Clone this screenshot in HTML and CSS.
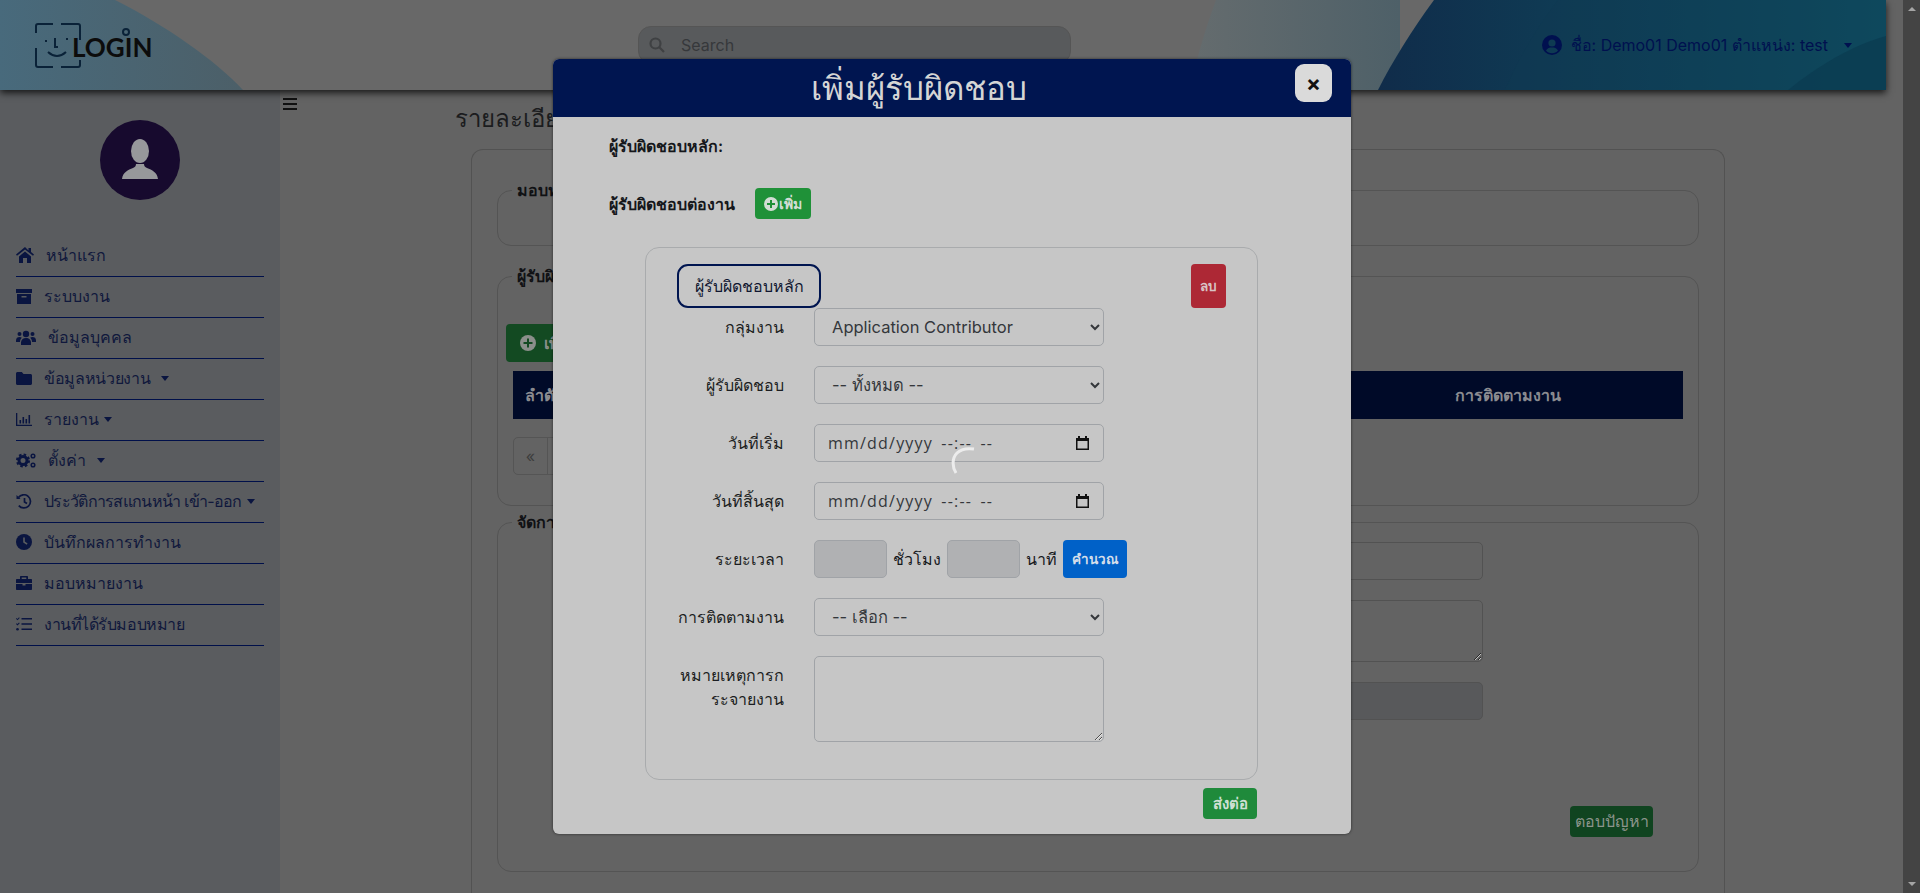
FILE: index.html
```html
<!DOCTYPE html>
<html lang="th">

<head>
    <meta charset="UTF-8">
    <meta name="viewport" content="width=device-width, initial-scale=1.0">
    <title>เพิ่มผู้รับผิดชอบ</title>
    <link rel="stylesheet" href="styles.css">
</head>

<body>
    <div class="page">
        <div class="viewport">
            <header class="topbar">
                <svg class="topbar-bg" viewBox="0 0 1886 90" preserveAspectRatio="none">
                    <defs>
                        <linearGradient id="blobLeft" x1="0" x2="1">
                            <stop offset="0" stop-color="#486a7c" />
                            <stop offset="1" stop-color="#4c5f68" />
                        </linearGradient>
                        <linearGradient id="blobGrey" x1="0" x2="1">
                            <stop offset="0" stop-color="#656c6e" />
                            <stop offset="1" stop-color="#4e6068" />
                        </linearGradient>
                        <linearGradient id="blobDark" x1="0" x2="1">
                            <stop offset="0" stop-color="#102c4a" />
                            <stop offset="1" stop-color="#0d5566" />
                        </linearGradient>
                    </defs>
                    <path d="M0 0H115C165 25 215 60 243 90H0Z" fill="url(#blobLeft)" />
                    <path d="M1216 0C1205 30 1196 60 1190 90H1400V0Z" fill="url(#blobGrey)" />
                    <path d="M1434 0C1412 30 1392 62 1378 90H1886V0Z" fill="url(#blobDark)" />
                    <path d="M1558 0C1535 30 1518 60 1505 90H1886V0Z" fill="#0f3a52" opacity=".45" />
                    <path d="M1788 90C1815 68 1850 46 1886 36V90Z" fill="#0a3a50" opacity=".7" />
                </svg>
                <a class="logo">
                    <svg class="logo-mark" width="96" height="46" viewBox="35 22 96 46" fill="none" stroke="#0a2238" stroke-width="2">
                        <path d="M53 24H38q-2 0-2 2v7M36 48v17q0 2 2 2h15M61 24h17q2 0 2 2v14M80 60v5q0 2-2 2H61" />
                        <path d="M46 40v2M67 38v2M55 38v9h3M48 52q9 8 18 0" />
                        <circle cx="126" cy="32" r="3" />
                    </svg>
                    <span class="logo-text">LOGIN</span>
                </a>
                <div class="search">
                    <svg width="16" height="16" viewBox="0 0 16 16" fill="none" stroke="#3f4143" stroke-width="2.2">
                        <circle cx="6.5" cy="6.5" r="5" />
                        <path d="M10.3 10.3L15 15" />
                    </svg>
                    <span>Search</span>
                </div>
                <div class="user">
                    <svg width="20" height="20" viewBox="0 0 20 20">
                        <circle cx="10" cy="10" r="10" fill="#00104f" />
                        <circle cx="10" cy="8" r="3.6" fill="#0e3a52" />
                        <path d="M4 15.5c1.5-2.5 3.5-3 6-3s4.5.5 6 3c-1.5 1.8-3.5 2.8-6 2.8s-4.5-1-6-2.8z" fill="#0e3a52" />
                    </svg>
                    <span>ชื่อ: Demo01 Demo01 ตำแหน่ง: test</span>
                    <i class="caret user-caret"></i>
                </div>
            </header>

            <div class="layout">
                <aside class="sidebar">
                    <div class="avatar">
                        <svg width="36" height="42" viewBox="0 0 36 42" fill="#97989b">
                            <ellipse cx="18" cy="12" rx="9" ry="12" />
                            <path d="M0 40c1-7 6-9 11-11 2-1 3-2 3-4h8c0 2 1 3 3 4 5 2 10 4 11 11z" />
                        </svg>
                    </div>
                    <nav class="menu">
                        <a class="menu-item">
                            <svg width="18" height="16" viewBox="0 0 18 16">
                                <path d="M9 0 0 7.5l1 1.3L9 2.5l8 6.3 1-1.3-3-2.4V1h-2.5v2.4z" />
                                <path d="M3 9.5V16h4v-5h4v5h4V9.5L9 4.5z" />
                            </svg>
                            <span>หน้าแรก</span>
                        </a>
                        <a class="menu-item">
                            <svg width="16" height="15" viewBox="0 0 16 15">
                                <path d="M0 0h16v4H0zM1 5h14v10H1zM5.5 7v1.5h5V7z" fill-rule="evenodd" />
                            </svg>
                            <span>ระบบงาน</span>
                        </a>
                        <a class="menu-item">
                            <svg width="20" height="15" viewBox="0 0 20 15">
                                <circle cx="10" cy="4" r="3.2" />
                                <circle cx="3.5" cy="4" r="2" />
                                <circle cx="16.5" cy="4" r="2" />
                                <path d="M5 15v-2.5C5 10 7 8 10 8s5 2 5 4.5V15zM0 10.5C0 8 1.5 7 3.5 7c1 0 1.8.3 2.3.8C4.500 9 4 10.5 4 12H0zM20 10.5C20 8 18.5 7 16.5 7c-1 0-1.8.3-2.3.8 1.3 1.2 1.8 2.7 1.8 4.200h4z" />
                            </svg>
                            <span>ข้อมูลบุคคล</span>
                        </a>
                        <a class="menu-item">
                            <svg width="16" height="13" viewBox="0 0 16 13">
                                <path d="M0 1.5C0 .7.7 0 1.5 0h4.3L7.5 2h7c.8 0 1.5.7 1.5 1.5v8c0 .8-.7 1.5-1.5 1.5h-13C.7 13 0 12.3 0 11.5z" />
                            </svg>
                            <span class="tight-s">ข้อมูลหน่วยงาน</span>
                            <i class="caret caret-wide"></i>
                        </a>
                        <a class="menu-item">
                            <svg width="16" height="13" viewBox="0 0 16 13">
                                <path d="M0 0h1.3v11.7H16V13H0zM3.5 7h1.6v3.5H3.5zM6.5 4h1.6v6.5H6.5zM9.5 6h1.6v4.5H9.500zM12.500 2h1.600v8.500h-1.600z" />
                            </svg>
                            <span>รายงาน</span>
                            <i class="caret"></i>
                        </a>
                        <a class="menu-item">
                            <svg width="20" height="15" viewBox="0 0 20 15">
                                <circle cx="7" cy="7.5" r="4" fill="none" stroke="#0a1540" stroke-width="3" />
                                <circle cx="7" cy="7.5" r="6" fill="none" stroke="#0a1540" stroke-width="2" stroke-dasharray="2.5 2.2" />
                                <circle cx="17" cy="3" r="1.8" fill="none" stroke="#0a1540" stroke-width="1.5" />
                                <circle cx="17" cy="12" r="1.8" fill="none" stroke="#0a1540" stroke-width="1.5" />
                            </svg>
                            <span>ตั้งค่า</span>
                            <i class="caret caret-wide"></i>
                        </a>
                        <a class="menu-item">
                            <svg width="16" height="15" viewBox="0 0 16 15" fill="none" stroke="#0a1540" stroke-width="1.7">
                                <path d="M2.5 3.5A6.6 6.6 0 1 1 2.8 11.6M8.5 4v4l2.5 1.5" />
                                <path d="M.5 1v4h4z" fill="#0a1540" stroke="none" />
                            </svg>
                            <span class="tight-l">ประวัติการสแกนหน้า เข้า-ออก</span>
                            <i class="caret"></i>
                        </a>
                        <a class="menu-item">
                            <svg width="16" height="16" viewBox="0 0 16 16">
                                <circle cx="8" cy="8" r="8" />
                                <path d="M7.2 3.5h1.6v4.1l2.8 1.8-.9 1.3-3.5-2.3z" fill="#5a5c5f" />
                            </svg>
                            <span>บันทึกผลการทำงาน</span>
                        </a>
                        <a class="menu-item">
                            <svg width="16" height="14" viewBox="0 0 16 14">
                                <path d="M5 0h6c.6 0 1 .4 1 1v2h3c.6 0 1 .4 1 1v3H0V4c0-.6.4-1 1-1h3V1c0-.6.4-1 1-1zm.7 1.5V3h4.6V1.5zM0 8h6.5v1.5h3V8H16v5c0 .6-.4 1-1 1H1c-.6 0-1-.4-1-1z" />
                            </svg>
                            <span>มอบหมายงาน</span>
                        </a>
                        <a class="menu-item">
                            <svg width="16" height="14" viewBox="0 0 16 14">
                                <path d="M5.5 1H16v1.600H5.500zM5.500 6.200H16v1.600H5.500zM5.500 11.400H16V13H5.500zM0 1.800l.7-.7.8.8L3 .3l.7.7L1.500 3.300zM0 7l.7-.7.8.8L3 5.500l.7.7L1.500 8.500z" />
                                <circle cx="1.5" cy="12.2" r="1.3" />
                            </svg>
                            <span class="tight-m">งานที่ได้รับมอบหมาย</span>
                        </a>
                    </nav>
                </aside>

                <main class="content">
                    <div class="toggle"><span></span><span></span><span></span></div>
                    <h1 class="page-title">รายละเอียดงาน</h1>
                    <section class="card">
                        <fieldset class="group group-assign">
                            <legend>มอบหมายงาน</legend>
                        </fieldset>
                        <fieldset class="group group-owner">
                            <legend>ผู้รับผิดชอบ</legend>
                            <button class="btn btn-add-dark">
                                <svg width="16" height="16" viewBox="0 0 16 16">
                                    <circle cx="8" cy="8" r="8" fill="#8b8f8b" />
                                    <path d="M7 3.5h2V7h3.5v2H9v3.5H7V9H3.5V7H7z" fill="#134a22" />
                                </svg>
                                เพิ่ม
                            </button>
                            <table class="owner-table">
                                <thead>
                                    <tr>
                                        <th class="col-no">ลำดับ</th>
                                        <th class="col-mid">ผู้รับผิดชอบ</th>
                                        <th class="col-track">การติดตามงาน</th>
                                    </tr>
                                </thead>
                            </table>
                            <ul class="pager">
                                <li>«</li>
                                <li>1</li>
                            </ul>
                        </fieldset>
                        <fieldset class="group group-manage">
                            <legend>จัดการ</legend>
                            <div class="dim-input"></div>
                            <div class="dim-input dim-area"><textarea></textarea></div>
                            <div class="dim-input dim-off"></div>
                            <button class="btn btn-answer">ตอบปัญหา</button>
                        </fieldset>
                    </section>
                </main>
            </div>
        </div>
        <div class="scrollbar"><i class="arrow-up"></i><i class="arrow-down"></i></div>
    </div>

    <div class="modal">
        <div class="modal-head">
            <h2>เพิ่มผู้รับผิดชอบ</h2>
            <button class="modal-close">×</button>
        </div>
        <div class="modal-body">
            <div class="owner-line">ผู้รับผิดชอบหลัก:</div>
            <div class="owner-line owner-add">
                <span>ผู้รับผิดชอบต่องาน</span>
                <button class="btn btn-add">
                    <svg width="14" height="14" viewBox="0 0 14 14">
                        <circle cx="7" cy="7" r="7" fill="#d3ddd5" />
                        <path d="M6 3h2v3h3v2H8v3H6V8H3V6h3z" fill="#1f9138" />
                    </svg>
                    เพิ่ม
                </button>
            </div>
            <div class="panel">
                <div class="panel-top">
                    <div class="badge">ผู้รับผิดชอบหลัก</div>
                    <button class="btn btn-del">ลบ</button>
                </div>
                <div class="field">
                    <label>กลุ่มงาน</label>
                    <select class="control">
                        <option>Application Contributor</option>
                    </select>
                </div>
                <div class="field">
                    <label>ผู้รับผิดชอบ</label>
                    <select class="control">
                        <option>-- ทั้งหมด --</option>
                    </select>
                </div>
                <div class="field">
                    <label>วันที่เริ่ม</label>
                    <div class="control control-date">
                        <span>mm/dd/yyyy --:-- --</span>
                        <svg width="13" height="14" viewBox="0 0 13 14">
                            <path d="M2 0h2v2h5V0h2v2h2v12H0V2h2zM1.5 5v7.500h10V5z" fill="#111" fill-rule="evenodd" />
                        </svg>
                    </div>
                </div>
                <div class="field">
                    <label>วันที่สิ้นสุด</label>
                    <div class="control control-date">
                        <span>mm/dd/yyyy --:-- --</span>
                        <svg width="13" height="14" viewBox="0 0 13 14">
                            <path d="M2 0h2v2h5V0h2v2h2v12H0V2h2zM1.5 5v7.500h10V5z" fill="#111" fill-rule="evenodd" />
                        </svg>
                    </div>
                </div>
                <div class="field">
                    <label>ระยะเวลา</label>
                    <div class="duration">
                        <input class="control control-off" disabled>
                        <span>ชั่วโมง</span>
                        <input class="control control-off" disabled>
                        <span>นาที</span>
                        <button class="btn btn-calc">คำนวณ</button>
                    </div>
                </div>
                <div class="field">
                    <label>การติดตามงาน</label>
                    <select class="control">
                        <option>-- เลือก --</option>
                    </select>
                </div>
                <div class="field">
                    <label>หมายเหตุการก<br>ระจายงาน</label>
                    <textarea class="control control-area"></textarea>
                </div>
            </div>
            <div class="modal-foot">
                <button class="btn btn-send">ส่งต่อ</button>
            </div>
        </div>
    </div>

    <svg class="spinner" width="30" height="30" viewBox="0 0 30 30" fill="none">
        <path d="M5 27C1 21 1 12 6 7C10 3 16 2 23 3" stroke="#ececec" stroke-width="3" />
    </svg>
</body>

</html>
```
FILE: styles.css
```css
* {
    box-sizing: border-box;
}

html {
    overflow: hidden;
}

body {
    margin: 0;
    height: 893px;
    overflow: hidden;
    background-color: #636363;
    font-family: Inter, "Noto Sans", sans-serif;
    font-size: 16px;
    color: #16181c;
}

button {
    font-family: inherit;
}

.page {
    display: flex;
    height: 893px;
}

.viewport {
    flex: 1;
    min-width: 0;
}

/* top bar */
.topbar {
    position: relative;
    display: flex;
    align-items: center;
    width: 1886px;
    height: 90px;
    background-color: #686868;
    box-shadow: 0 3px 7px rgba(0, 0, 0, 0.75);
}

.topbar-bg {
    position: absolute;
    top: 0;
    left: 0;
    width: 100%;
    height: 100%;
}

.logo {
    position: relative;
    display: flex;
    align-items: center;
    width: 603px;
    margin-left: 35px;
}

.logo-text {
    margin-left: -59px;
    margin-top: 3px;
    font-family: Lato, sans-serif;
    font-size: 26px;
    font-weight: 700;
    color: #0c0c0c;
}

.search {
    position: relative;
    display: flex;
    align-items: center;
    gap: 16px;
    width: 433px;
    height: 38px;
    padding-left: 10px;
    background-color: #585a5c;
    border: 1px solid #555;
    border-radius: 13px;
    color: #36383b;
}

.user {
    position: relative;
    display: flex;
    align-items: center;
    gap: 9px;
    margin-left: auto;
    padding-right: 34px;
    color: #00104f;
}

.caret {
    display: inline-block;
    border-top: 5px solid #0a1540;
    border-left: 4px solid transparent;
    border-right: 4px solid transparent;
    margin-left: -7px;
}

.caret-wide {
    margin-left: -1px;
}

.user-caret {
    margin-left: 7px;
    border-top-color: #00104f;
}

/* left menu */
.layout {
    display: flex;
    height: 803px;
}

.sidebar {
    width: 280px;
    flex-shrink: 0;
    background-color: #5a5c5f;
    padding: 30px 16px 0;
}

.avatar {
    display: flex;
    align-items: flex-end;
    justify-content: center;
    width: 80px;
    height: 80px;
    margin: 0 auto 36px;
    padding-bottom: 19px;
    border-radius: 50%;
    background-color: #170a2e;
}

.menu-item {
    display: flex;
    align-items: center;
    gap: 12px;
    height: 41px;
    padding-bottom: 2px;
    border-bottom: 1px solid #00104a;
    color: #10183c;
    white-space: nowrap;
}

.menu-item svg {
    flex-shrink: 0;
    fill: #0a1540;
}

.menu-item svg[fill="none"] {
    fill: none;
}

.tight-s {
    letter-spacing: -0.35px;
}

.tight-m {
    letter-spacing: -0.45px;
}

.tight-l {
    letter-spacing: -0.7px;
}

/* page behind the dialog */
.content {
    position: relative;
    flex: 1;
    min-width: 0;
}

.toggle {
    display: flex;
    flex-direction: column;
    gap: 3px;
    width: 14px;
    margin: 8px 0 0 3px;
}

.toggle span {
    height: 2px;
    background-color: #101010;
}

.page-title {
    margin: -9px 0 0 175px;
    font-size: 24px;
    font-weight: 400;
    line-height: 36px;
    color: #1b1c1e;
}

.card {
    width: 1254px;
    height: 744px;
    margin: 12px 0 0 191px;
    padding: 28px 25px 0;
    border: 1px solid #525252;
    border-bottom: none;
    border-radius: 12px 12px 0 0;
}

.group {
    margin: 0;
    padding: 0;
    border: 1px solid #545454;
    border-radius: 14px;
}

.group legend {
    margin-left: 14px;
    padding: 0 5px;
    font-weight: 600;
    line-height: 24px;
    color: #101114;
}

.group-assign {
    height: 68px;
    margin-bottom: 18px;
}

.group-owner {
    height: 242px;
    margin-bottom: 4px;
}

.group-manage {
    position: relative;
    height: 362px;
}

.btn {
    display: inline-flex;
    align-items: center;
    justify-content: center;
    border: none;
    border-radius: 4px;
    font-size: 14px;
    font-weight: 600;
    padding: 0;
}

.btn-add-dark {
    justify-content: flex-start;
    gap: 8px;
    width: 110px;
    height: 38px;
    margin: 36px 0 0 8px;
    padding-left: 14px;
    background-color: #134a22;
    color: #8b8f8b;
    font-size: 16px;
}

.owner-table {
    width: 1170px;
    margin: 9px 0 0 15px;
    border-collapse: collapse;
    table-layout: fixed;
    background-color: #000a28;
    color: #8a8b90;
}

.owner-table th {
    height: 48px;
    font-weight: 600;
    padding: 0;
}

.owner-table .col-no {
    width: 110px;
    text-align: left;
    padding-left: 12px;
}

.owner-table .col-track {
    width: 350px;
}

.pager {
    display: flex;
    margin: 18px 0 0 15px;
    padding: 0;
    list-style: none;
}

.pager li {
    width: 35px;
    height: 38px;
    line-height: 36px;
    text-align: center;
    border: 1px solid #555;
    margin-right: -1px;
    color: #3d3d3d;
}

.pager li:first-child {
    border-radius: 5px 0 0 5px;
}

.dim-input {
    width: 300px;
    height: 38px;
    margin: 20px 215px 0 auto;
    border: 1px solid #525252;
    border-radius: 5px;
}

.dim-input:first-of-type {
    margin-top: 8px;
}

.dim-area {
    height: 62px;
    border-radius: 5px;
}

.dim-area textarea {
    display: block;
    width: 100%;
    height: 100%;
    background: transparent;
    border: none;
    outline: none;
}

.dim-off {
    background-color: #58595b;
}

.btn-answer {
    position: absolute;
    right: 45px;
    bottom: 34px;
    width: 83px;
    height: 31px;
    background-color: #104420;
    color: #8c958c;
    font-size: 16px;
    font-weight: 500;
}

/* scrollbar */
.scrollbar {
    position: relative;
    width: 17px;
    flex-shrink: 0;
    background-color: #444;
}

.arrow-up,
.arrow-down {
    position: absolute;
    left: 5px;
    border-left: 4px solid transparent;
    border-right: 4px solid transparent;
}

.arrow-up {
    top: 7px;
    border-bottom: 4px solid #a5a5a5;
}

.arrow-down {
    bottom: 7px;
    border-top: 4px solid #a5a5a5;
}

/* dialog */
.modal {
    position: absolute;
    top: 59px;
    left: 553px;
    display: flex;
    flex-direction: column;
    width: 798px;
    height: 775px;
    border-radius: 6px;
    overflow: hidden;
    background-color: #c6c6c6;
    box-shadow: 0 0 3px rgba(0, 0, 0, 0.6);
}

.modal-head {
    position: relative;
    display: flex;
    justify-content: center;
    height: 58px;
    padding-right: 66px;
    background-color: #001550;
}

.modal-head h2 {
    margin: 0;
    font-size: 33px;
    font-weight: 400;
    line-height: 58px;
    color: #d5d5d5;
}

.modal-close {
    position: absolute;
    top: 5px;
    right: 19px;
    width: 37px;
    height: 38px;
    border: none;
    border-radius: 9px;
    background-color: #dadada;
    color: #111;
    font-size: 22px;
    font-weight: 700;
    padding: 0;
}

.modal-body {
    flex: 1;
    padding: 17px 0 0 56px;
}

.owner-line {
    height: 24px;
    line-height: 24px;
    font-weight: 600;
    color: #15171b;
}

.owner-add {
    display: flex;
    align-items: center;
    gap: 20px;
    height: 31px;
    margin-top: 30px;
}

.btn-add {
    gap: 1px;
    width: 56px;
    height: 31px;
    background-color: #1f9138;
    color: #d3ddd5;
}

.panel {
    width: 613px;
    height: 533px;
    margin: 28px 0 0 36px;
    padding: 16px 31px 0;
    border: 1px solid #a9abad;
    border-radius: 14px;
}

.panel-top {
    display: flex;
    justify-content: space-between;
}

.badge {
    display: flex;
    align-items: center;
    justify-content: center;
    width: 144px;
    height: 44px;
    border: 2px solid #001550;
    border-radius: 11px;
    color: #101630;
    font-weight: 500;
}

.btn-del {
    width: 35px;
    height: 44px;
    background-color: #ad2835;
    color: #d8c3c5;
    font-size: 13.5px;
}

.field {
    display: flex;
    align-items: flex-start;
    gap: 30px;
    margin-bottom: 20px;
}

.field label {
    width: 107px;
    flex-shrink: 0;
    padding-top: 7px;
    line-height: 24px;
    text-align: right;
    color: #1b1d21;
}

.control {
    display: block;
    width: 290px;
    height: 38px;
    padding: 6px 12px;
    background-color: transparent;
    border: 1px solid #a0a3a7;
    border-radius: 5px;
    font-family: "Open Sans", sans-serif;
    font-size: 16px;
    color: #34373b;
}

select.control {
    padding-left: 13px;
    font-family: Inter, sans-serif;
    font-size: 16.5px;
}

.control-date {
    display: flex;
    align-items: center;
    justify-content: space-between;
    padding: 0 14px 0 13px;
    word-spacing: 3px;
    letter-spacing: 1.2px;
}

.duration {
    display: flex;
    align-items: center;
    gap: 6px;
}

.control-off {
    width: 73px;
    background-color: #b0b1b3;
}

.btn-calc {
    width: 64px;
    height: 38px;
    background-color: #0061c8;
    color: #d5deea;
    font-size: 13.5px;
}

.control-area {
    height: 86px;
}

.modal-foot {
    display: flex;
    justify-content: flex-end;
    width: 648px;
    margin-top: 8px;
}

.btn-send {
    width: 54px;
    height: 31px;
    background-color: #1f8a3b;
    color: #cfe0d3;
    font-size: 15px;
}

.spinner {
    position: absolute;
    top: 446px;
    left: 951px;
}
```
